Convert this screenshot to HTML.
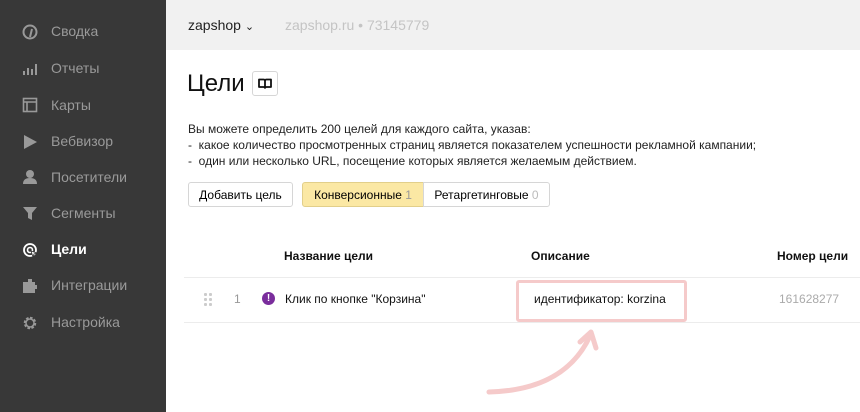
<!DOCTYPE html><html><head><meta charset="utf-8"><style>
body{margin:0;width:860px;height:412px;overflow:hidden;font-family:"Liberation Sans",sans-serif;background:#fff;position:relative}
.sb{position:absolute;left:0;top:0;width:166px;height:412px;background:#383838}
.sb div{position:absolute;left:51px;font-size:14px;color:#9a9a9a}
.sb svg{position:absolute;left:22px}
.hd{position:absolute;left:166px;top:0;right:0;height:50px;background:#f1f1f1}
.a{position:absolute;white-space:nowrap}
.btn{position:absolute;border:1px solid #d6d6d6;border-radius:3px;height:25px;line-height:25px;font-size:12px;box-sizing:border-box}
</style></head><body>
<div class="sb">
<svg style="top:24px" width="16" height="16" viewBox="0 0 16 16"><circle cx="8" cy="8" r="6.5" fill="none" stroke="#999" stroke-width="2"/><path d="M8 13 L10 5" stroke="#999" stroke-width="2"/></svg><div style="top:23px">Сводка</div>
<svg style="top:61px" width="16" height="16"><rect x="1" y="10" width="2" height="4" fill="#999"/><rect x="5" y="7" width="2" height="7" fill="#999"/><rect x="9" y="8" width="2" height="6" fill="#999"/><rect x="13" y="3" width="2" height="11" fill="#999"/></svg><div style="top:60px">Отчеты</div>
<svg style="top:97px" width="16" height="16"><rect x="1.5" y="1.5" width="13" height="13" fill="none" stroke="#999" stroke-width="1.6"/><path d="M1 5H15M5 5V15" stroke="#999" stroke-width="1.6"/></svg><div style="top:97px">Карты</div>
<svg style="top:134px" width="16" height="16"><path d="M2 1L15 8L2 15Z" fill="#999"/></svg><div style="top:133px">Вебвизор</div>
<svg style="top:169px" width="16" height="16"><circle cx="8" cy="5" r="4" fill="#999"/><path d="M1 15Q1 9 8 9Q15 9 15 15Z" fill="#999"/></svg><div style="top:169px">Посетители</div>
<svg style="top:205px" width="16" height="16"><path d="M1 2H15L10 8V15L6 13V8Z" fill="#999"/></svg><div style="top:205px">Сегменты</div>
<svg style="top:242px" width="16" height="16"><circle cx="8" cy="8" r="6" fill="none" stroke="#fff" stroke-width="1.8"/><circle cx="8" cy="8" r="2.5" fill="none" stroke="#fff" stroke-width="1.6"/><path d="M9 9L15 11L12 12L11 15Z" fill="#fff" stroke="#383838" stroke-width=".8"/></svg><div style="top:241px;color:#fff;font-weight:bold">Цели</div>
<svg style="top:278px" width="16" height="16"><path d="M1 4H6V1H10V4H13V7H15V11H13V15H1Z" fill="#999"/></svg><div style="top:277px">Интеграции</div>
<svg style="top:315px" width="16" height="16"><circle cx="8" cy="8" r="5" fill="none" stroke="#999" stroke-width="2.5" stroke-dasharray="2.5 1.4"/><circle cx="8" cy="8" r="4" fill="none" stroke="#999" stroke-width="1.5"/></svg><div style="top:314px">Настройка</div>
</div>
<div class="hd"></div>
<div class="a" style="left:188px;top:17px;font-size:14px;color:#222">zapshop <span style="font-size:11px">&#8964;</span></div>
<div class="a" style="left:285px;top:17px;font-size:14px;color:#c4c4c4">zapshop.ru • 73145779</div>
<div class="a" style="left:187px;top:70px;font-size:24px;color:#111">Цели</div>
<div class="btn" style="left:252px;top:71px;width:26px;height:25px"><svg style="position:absolute;left:5px;top:6px" width="14" height="11"><path d="M1 1.5H5.5Q7 1.5 7 3V10Q7 9 5.5 9H1ZM13 1.5H8.5Q7 1.5 7 3V10Q7 9 8.5 9H13Z" fill="none" stroke="#111" stroke-width="1.8" stroke-linejoin="round"/></svg></div>
<div class="a" style="left:188px;top:121px;font-size:12px;color:#222;line-height:16px">Вы можете определить 200 целей для каждого сайта, указав:<br>- &nbsp;какое количество просмотренных страниц является показателем успешности рекламной кампании;<br>- &nbsp;один или несколько URL, посещение которых является желаемым действием.</div>
<div class="btn" style="left:188px;top:182px;width:105px;text-align:center">Добавить цель</div>
<div class="btn" style="left:302px;top:182px;width:122px;background:#fbe8a4;border-color:#e2cf8a;text-align:center;border-radius:3px 0 0 3px">Конверсионные <span style="color:#999">1</span></div>
<div class="btn" style="left:423px;top:182px;width:127px;text-align:center;border-radius:0 3px 3px 0">Ретаргетинговые <span style="color:#bbb">0</span></div>
<div class="a" style="left:284px;top:249px;font-size:12px;font-weight:bold;color:#111">Название цели</div>
<div class="a" style="left:531px;top:249px;font-size:12px;font-weight:bold;color:#111">Описание</div>
<div class="a" style="left:777px;top:249px;font-size:12px;font-weight:bold;color:#111">Номер цели</div>
<div class="a" style="left:184px;top:277px;width:676px;border-top:1px solid #ececec"></div>
<div class="a" style="left:184px;top:322px;width:676px;border-top:1px solid #ececec"></div>
<div class="a" style="left:203px;top:292px;width:11px;height:16px;background:radial-gradient(circle,#ccc 1.6px,transparent 1.7px) 0 0/5px 5px"></div>
<div class="a" style="left:234px;top:292px;font-size:12px;color:#999">1</div>
<div class="a" style="left:262px;top:292px;width:13px;height:13px;border-radius:50%;background:#7a2d9c;color:#fff;font-size:10px;font-weight:bold;text-align:center;line-height:13px">!</div>
<div class="a" style="left:285px;top:292px;font-size:12px;color:#111">Клик по кнопке "Корзина"</div>
<div class="a" style="left:516px;top:280px;width:165px;height:36px;border:3px solid #f5caca;border-radius:3px"></div>
<div class="a" style="left:534px;top:292px;font-size:12px;color:#111">идентификатор: korzina</div>
<div class="a" style="left:779px;top:292px;font-size:12px;color:#aaa">161628277</div>
<svg class="a" style="left:480px;top:320px" width="130" height="80"><path d="M9 72Q85 70 110 16" fill="none" stroke="#f5caca" stroke-width="5" stroke-linecap="round"/><path d="M100 22L111 12L116 28" fill="none" stroke="#f5caca" stroke-width="5" stroke-linecap="round" stroke-linejoin="round"/></svg>
</body></html>
